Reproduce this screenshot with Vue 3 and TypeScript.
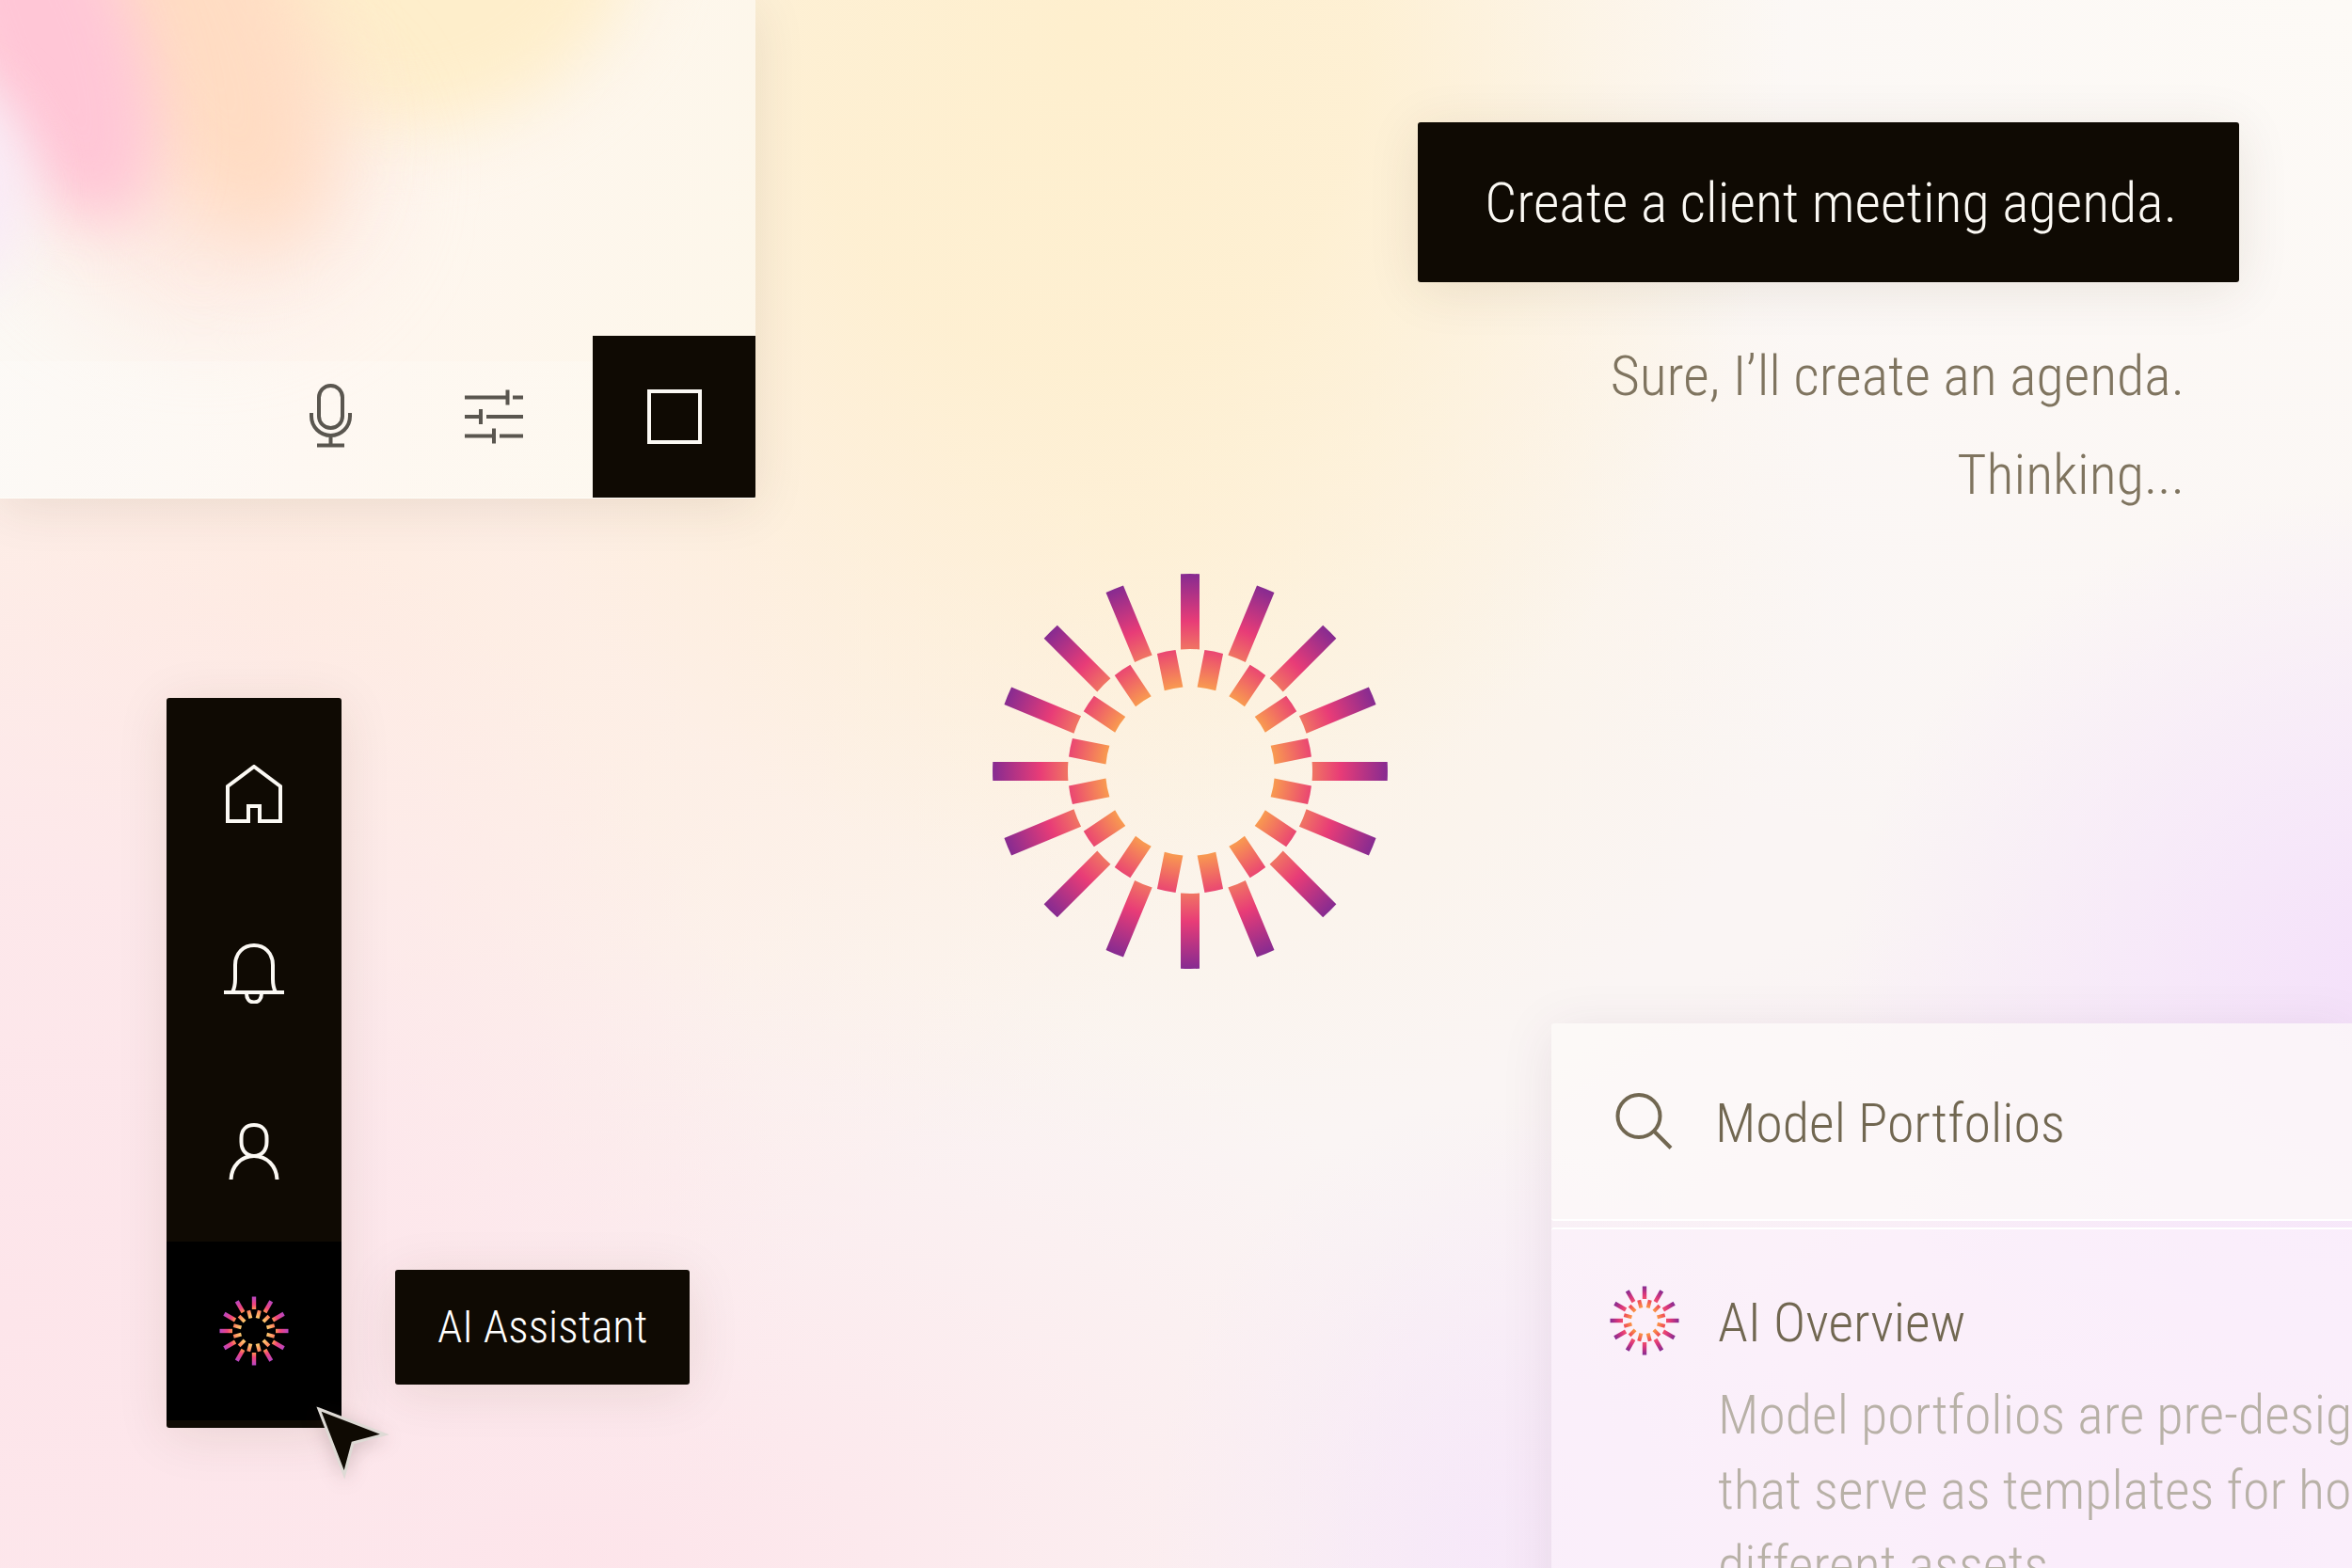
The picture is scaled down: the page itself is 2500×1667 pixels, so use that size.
<script setup lang="ts">
import { ref } from 'vue'

interface NavItem {
  id: string
  label: string
  paths: string[]
}

const query = ref('Model Portfolios')

const navItems: NavItem[] = [
  { id: 'home', label: 'Home', paths: ['M4 60 V23 L32 2 L60 23 V60 H38 V44 H26 V60 Z'] },
  {
    id: 'alerts',
    label: 'Notifications',
    paths: [
      'M0 52 H64',
      'M9 52 C11 48 12 43 12 38 V23 C12 10 21 2 32 2 S52 10 52 23 V38 C52 43 53 48 55 52',
      'M24 53 C24 59 27 62.5 32 62.5 S40 59 40 53',
    ],
  },
  {
    id: 'profile',
    label: 'Profile',
    paths: [
      'M18.5 17 C18.5 8 24 3 32 3 S45.5 8 45.5 17 V21 C45.5 30 40 36 32 36 S18.5 30 18.5 21 Z',
      'M7.5 61 C8 47 18 36 32 36 S56 47 56.5 61',
    ],
  },
]

const replies: string[] = ['Sure, I’ll create an agenda.', 'Thinking...']

const overview: string[] = [
  'Model portfolios are pre-designed portfolios',
  'that serve as templates for how to allocate',
  'different assets.',
]

// Evenly spaced ray angles, optionally shifted by half a step for the inner ring
const rays = (count: number, shifted = false): number[] =>
  Array.from({ length: count }, (_, i) => ((i + (shifted ? 0.5 : 0)) * 360) / count)

const miniOuter = 'M-2.2 -36.5 H2.2 V-23 H-2.2 Z'
const miniInner = 'M-2 -22.5 H2 V-14 H-2 Z'
</script>

<template>
  <main class="page">
    <div class="column column-left">
      <section class="composer" aria-label="Prompt composer">
        <div class="aura" aria-hidden="true">
          <span class="blob blob-yellow"></span>
          <span class="blob blob-glow"></span>
          <span class="blob blob-peach"></span>
          <span class="blob blob-pink"></span>
          <span class="blob blob-lilac"></span>
        </div>
        <div class="toolbar">
          <button type="button" class="tool" aria-label="Dictate">
            <svg class="tool-icon" viewBox="0 0 80 80">
              <rect x="27" y="7" width="25" height="45" rx="12.5" />
              <path d="M19 36 V39.5 A20.5 20.5 0 0 0 60 39.5 V36 M39.5 60 V71 M25 70.5 H54" />
            </svg>
          </button>
          <button type="button" class="tool" aria-label="Settings">
            <svg class="tool-icon" viewBox="0 0 80 80">
              <path d="M9 19.5 H54 M60 19.5 H71 M54.5 11.5 V27.5" />
              <path d="M9 40 H26 M32 40 H71 M26 32 V48" />
              <path d="M9 60.5 H40 M46 60.5 H71 M40 52.5 V68.5" />
            </svg>
          </button>
          <button type="button" class="tool tool-stop" aria-label="Stop">
            <svg class="tool-icon" viewBox="0 0 80 80">
              <rect x="13" y="13" width="54" height="54" />
            </svg>
          </button>
        </div>
      </section>

      <nav class="rail" aria-label="Main">
        <button v-for="item in navItems" :key="item.id" type="button" class="rail-item" :aria-label="item.label">
          <svg class="rail-icon" viewBox="0 0 64 64">
            <path v-for="d in item.paths" :key="d" :d="d" />
          </svg>
        </button>
        <button type="button" class="rail-item rail-active" aria-describedby="assistant-tip" aria-label="AI Assistant">
          <svg class="mini-burst" viewBox="-38 -38 76 76">
            <defs>
              <radialGradient id="dark-outer" gradientUnits="userSpaceOnUse" cx="0" cy="0" r="37">
                <stop offset="0.62" stop-color="#ff9350" />
                <stop offset="0.76" stop-color="#f0447c" />
                <stop offset="1" stop-color="#b446c8" />
              </radialGradient>
              <radialGradient id="dark-inner" gradientUnits="userSpaceOnUse" cx="0" cy="0" r="23">
                <stop offset="0.6" stop-color="#ffcf6e" />
                <stop offset="1" stop-color="#ff7a5c" />
              </radialGradient>
            </defs>
            <path v-for="a in rays(12)" :key="'o' + a" :d="miniOuter" fill="url(#dark-outer)" :transform="`rotate(${a})`" />
            <path v-for="a in rays(12, true)" :key="'i' + a" :d="miniInner" fill="url(#dark-inner)" :transform="`rotate(${a})`" />
          </svg>
        </button>
        <span id="assistant-tip" class="tooltip" role="tooltip">AI Assistant</span>
        <svg class="cursor" viewBox="0 0 80 80" aria-hidden="true">
          <path d="M4 4 L74 31 L40 40 L31 74 Z" />
        </svg>
      </nav>
    </div>

    <svg class="burst" viewBox="-210 -210 420 420" role="img" aria-label="AI Assistant logo">
      <defs>
        <radialGradient id="burst-outer" gradientUnits="userSpaceOnUse" cx="0" cy="0" r="210">
          <stop offset="0.62" stop-color="#f07463" />
          <stop offset="0.76" stop-color="#e83c77" />
          <stop offset="1" stop-color="#862b91" />
        </radialGradient>
        <radialGradient id="burst-inner" gradientUnits="userSpaceOnUse" cx="0" cy="0" r="130">
          <stop offset="0.68" stop-color="#f99d4f" />
          <stop offset="1" stop-color="#ea4672" />
        </radialGradient>
      </defs>
      <path
        v-for="a in rays(16)"
        :key="'o' + a"
        d="M-10 -209.7 A210 210 0 0 1 10 -209.7 V-129.6 A130 130 0 0 0 -10 -129.6 Z"
        fill="url(#burst-outer)"
        :transform="`rotate(${a})`"
      />
      <path
        v-for="a in rays(16, true)"
        :key="'i' + a"
        d="M-10 -129.5 A130 130 0 0 1 10 -129.5 V-89.3 A90 90 0 0 0 -10 -89.3 Z"
        fill="url(#burst-inner)"
        :transform="`rotate(${a})`"
      />
    </svg>

    <div class="column column-right">
      <section class="chat" aria-label="Conversation">
        <p class="bubble">Create a client meeting agenda.</p>
        <p v-for="reply in replies" :key="reply" class="reply">{{ reply }}</p>
      </section>

      <section class="search" aria-label="Search">
        <label class="search-bar">
          <svg class="search-icon" viewBox="0 0 64 64" aria-hidden="true">
            <circle cx="27" cy="26.5" r="22.5" />
            <path d="M43 42.5 L61 60.5" />
          </svg>
          <input v-model="query" class="search-input" type="text" aria-label="Search" />
        </label>
        <article class="result">
          <svg class="mini-burst" viewBox="-38 -38 76 76" aria-hidden="true">
            <defs>
              <radialGradient id="light-outer" gradientUnits="userSpaceOnUse" cx="0" cy="0" r="37">
                <stop offset="0.62" stop-color="#f2506a" />
                <stop offset="0.76" stop-color="#d8357c" />
                <stop offset="1" stop-color="#7f2a93" />
              </radialGradient>
              <radialGradient id="light-inner" gradientUnits="userSpaceOnUse" cx="0" cy="0" r="23">
                <stop offset="0.6" stop-color="#fb9a45" />
                <stop offset="1" stop-color="#ee4058" />
              </radialGradient>
            </defs>
            <path v-for="a in rays(12)" :key="'o' + a" :d="miniOuter" fill="url(#light-outer)" :transform="`rotate(${a})`" />
            <path v-for="a in rays(12, true)" :key="'i' + a" :d="miniInner" fill="url(#light-inner)" :transform="`rotate(${a})`" />
          </svg>
          <div class="result-text">
            <h2 class="result-title">AI Overview</h2>
            <p class="result-body">
              <span v-for="line in overview" :key="line" class="result-line">{{ line }}</span>
            </p>
          </div>
        </article>
      </section>
    </div>
  </main>
</template>

<style>
body {
  margin: 0;
}
</style>

<style scoped>
.page {
  --ink: #0f0a03;
  --paper: #fbf9f4;
  display: grid;
  grid-template-columns: 803fr 704fr 993fr;
  grid-template-rows: 100%;
  height: 100vh;
  overflow: hidden;
  font-family: 'Roboto Condensed', 'Roboto', 'Liberation Sans', sans-serif;
  font-size: 60px;
  font-weight: 300;
  line-height: 80px;
  background:
    radial-gradient(ellipse 30% 54% at 46% 2%, #feefce 0%, #feefcfdd 40%, #feefd055 75%, #feefd000 100%),
    radial-gradient(ellipse 24% 32% at 102% 63%, #f4e0fa 0%, #f5e4fbaa 45%, #f5e6fb00 100%),
    radial-gradient(ellipse 38% 44% at 92% 100%, #f8e5fb 0%, #f8e6fb00 100%),
    radial-gradient(ellipse 14% 28% at 63% 98%, #f5e7f9cc 0%, #f5e7f900 100%),
    radial-gradient(ellipse 34% 56% at 0% 84%, #fde5ea 0%, #fde6ebcc 50%, #fde5ea00 100%),
    radial-gradient(ellipse 44% 40% at 24% 100%, #fde4ea 0%, #fde5ea00 100%),
    radial-gradient(ellipse 42% 50% at 12% 38%, #feece1 0%, #feede3aa 50%, #feecdf00 100%),
    radial-gradient(ellipse 30% 40% at 48% 34%, #fdf2de 0%, #fdf2de00 100%),
    radial-gradient(ellipse 60% 60% at 100% 0%, #fdfaf6 0%, #fdfaf600 100%),
    #faf5f4;
}

.column {
  display: flex;
  flex-direction: column;
  grid-row: 1;
  min-width: 0;
}

.column-left {
  grid-column: 1;
  align-items: flex-start;
}

.column-right {
  grid-column: 3;
}

/* Composer */
.composer {
  position: relative;
  display: flex;
  flex-direction: column;
  justify-content: flex-end;
  box-sizing: border-box;
  width: 100%;
  height: 530px;
  flex: none;
  overflow: hidden;
  background: linear-gradient(100deg, #fbf9f5 0%, #fef6ef 45%, #fdf7ea 100%);
  border-radius: 0 0 3px 0;
}

.composer,
.rail,
.tooltip,
.bubble {
  box-shadow: 0 8px 56px rgba(70, 45, 10, 0.1);
}

.aura {
  position: absolute;
  inset: 0;
  overflow: hidden;
}

.blob {
  position: absolute;
  border-radius: 50%;
}

.blob-yellow {
  left: 160px;
  top: -300px;
  width: 520px;
  height: 440px;
  background: #feeecb;
  filter: blur(36px);
}

.blob-glow {
  left: 40px;
  top: 40px;
  width: 350px;
  height: 290px;
  background: #fde2dab0;
  filter: blur(54px);
}

.blob-peach {
  left: 90px;
  top: -220px;
  width: 230px;
  height: 490px;
  background: #ffdcc3;
  filter: blur(42px);
  transform: rotate(-24deg);
}

.blob-pink {
  left: -50px;
  top: -190px;
  width: 190px;
  height: 440px;
  background: #ffc6d6;
  filter: blur(32px);
  transform: rotate(-22deg);
}

.blob-lilac {
  left: -130px;
  top: 90px;
  width: 160px;
  height: 220px;
  background: #f9eaf6;
  filter: blur(30px);
}

.toolbar {
  position: relative;
  display: flex;
  justify-content: flex-end;
  background: linear-gradient(to bottom, #ffffff00 27px, #ffffff33 27px);
  border-bottom: 1px solid #fffdf8;
}

.tool {
  display: grid;
  place-items: center;
  width: 173px;
  height: 172px;
  padding: 0;
  border: 0;
  background: none;
  color: #5a564f;
}

.tool-stop {
  margin-left: 19px;
  background: var(--ink);
  color: var(--paper);
}

.tool-icon {
  width: 80px;
  height: 80px;
}

.tool-icon,
.rail-icon,
.search-icon {
  fill: none;
  stroke: currentColor;
  stroke-width: 4;
}

/* Navigation rail */
.rail {
  position: relative;
  display: flex;
  flex-direction: column;
  width: 186px;
  margin: 212px 0 0 177px;
  padding: 8px 0;
  border-radius: 3px;
  background: var(--ink);
}

.rail-item {
  display: grid;
  place-items: center;
  height: 190px;
  padding: 0;
  border: 0;
  background: none;
  color: var(--paper);
}

.rail-active {
  background: #000;
}

.rail-icon,
.search-icon {
  flex: none;
  width: 64px;
  height: 64px;
}

.mini-burst {
  flex: none;
  width: 76px;
  height: 76px;
}

.tooltip {
  position: absolute;
  left: 243px;
  bottom: 46px;
  padding: 21px 45px;
  border-radius: 3px;
  background: var(--ink);
  color: #fff;
  font-size: 48px;
  white-space: nowrap;
}

.cursor {
  position: absolute;
  left: 158px;
  top: 752px;
  width: 80px;
  height: 80px;
  fill: var(--ink);
  stroke: #dedad5;
  stroke-width: 3;
  filter: drop-shadow(0 4px 10px rgba(60, 30, 30, 0.2));
}

/* Logo */
.burst {
  grid-column: 1 / -1;
  grid-row: 1;
  place-self: center;
  width: 420px;
  height: 420px;
  margin: 0 0 28px 30px;
}

/* Conversation */
.chat {
  display: flex;
  flex-direction: column;
  gap: 25px;
  padding: 130px 120px 0 0;
}

.bubble {
  margin: 0 0 35px;
  padding: 46px 66px 44px;
  border-radius: 3px;
  background: var(--ink);
  color: var(--paper);
  text-align: right;
  white-space: nowrap;
}

.reply {
  margin: 0;
  padding-right: 58px;
  color: #7f745f;
  text-align: right;
}

/* Search */
.search {
  display: flex;
  flex-direction: column;
  gap: 7px;
  flex: none;
  margin: 543px 0 0 142px;
  border-radius: 3px 0 0 3px;
  box-shadow: 0 8px 56px rgba(90, 50, 90, 0.1);
  color: #716751;
  font-size: 58px;
}

.search-bar {
  display: flex;
  align-items: center;
  gap: 44px;
  box-sizing: border-box;
  height: 210px;
  padding-left: 66px;
  border-bottom: 2px solid #fff;
  border-radius: 3px 0 0 3px;
  background: #fcfaf8bb;
}

.search-input {
  flex: 1;
  min-width: 0;
  height: 80px;
  padding: 4px 0 0;
  border: 0;
  outline: 0;
  background: none;
  color: inherit;
  font: inherit;
}

.result {
  display: flex;
  gap: 40px;
  padding: 59px 0 60px 61px;
  border-top: 2px solid #fff;
  border-radius: 3px 0 0 0;
  background: #fcf1fc99;
}

.result-text {
  flex: 1;
  min-width: 0;
}

.result-title {
  margin: 0 0 18px;
  font: inherit;
}

.result-body {
  margin: 0;
  color: #b8b1a7;
}

.result-line {
  display: block;
  white-space: nowrap;
}
</style>
